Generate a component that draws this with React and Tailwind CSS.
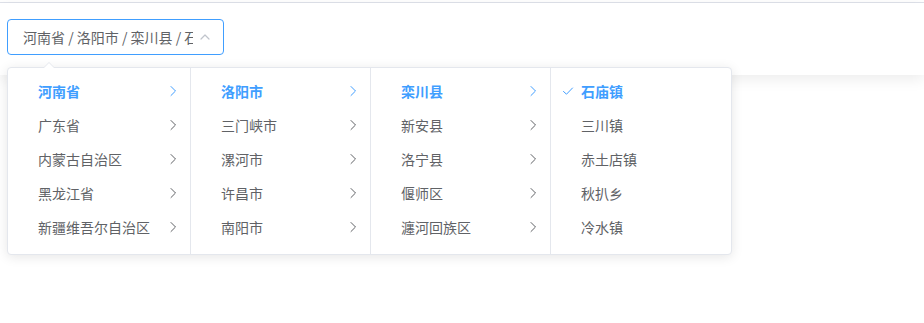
import React from "react";

const columns = [
  {
    items: ["河南省", "广东省", "内蒙古自治区", "黑龙江省", "新疆维吾尔自治区"],
    width: "w-[183px]",
    leaf: false,
  },
  {
    items: ["洛阳市", "三门峡市", "漯河市", "许昌市", "南阳市"],
    width: "w-[180px]",
    leaf: false,
  },
  {
    items: ["栾川县", "新安县", "洛宁县", "偃师区", "瀍河回族区"],
    width: "w-[180px]",
    leaf: false,
  },
  {
    items: ["石庙镇", "三川镇", "赤土店镇", "秋扒乡", "冷水镇"],
    width: "w-[180px]",
    leaf: true,
  },
];

function Chevron({ className }) {
  return (
    <svg viewBox="0 0 14 14" className={className} fill="none">
      <path d="M5 2.5 L9.5 7 L5 11.5" stroke="currentColor" strokeWidth="1" strokeLinecap="round" strokeLinejoin="round" />
    </svg>
  );
}

function Check({ className }) {
  return (
    <svg viewBox="0 0 12 12" className={className} fill="none">
      <path d="M1.5 6.5 L4.5 9.2 L10.5 3" stroke="currentColor" strokeWidth="1" strokeLinecap="round" strokeLinejoin="round" />
    </svg>
  );
}

function Column({ col, last }) {
  return (
    <div className={`${col.width} h-[186px] pt-[6px] ${last ? "" : "border-r border-[#e4e7ed]"}`}>
      {col.items.map((name, i) => {
        const active = i === 0;
        return (
          <div
            key={name}
            className={`flex items-center h-[34px] pl-[10px] pr-[10px] text-[14px] ${
              active ? "text-[#409eff] font-bold" : "text-[#606266]"
            }`}
          >
            <div className="w-[20px] flex items-center">
              {col.leaf && active && <Check className="w-[12px] h-[12px] ml-[1px]" />}
            </div>
            <span className="flex-1 whitespace-nowrap">{name}</span>
            {!col.leaf && (
              <Chevron
                className={`w-[14px] h-[14px] ${active ? "text-[#409eff]" : "text-[#606266]"}`}
              />
            )}
          </div>
        );
      })}
    </div>
  );
}

export default function App() {
  return (
    <div
      className="relative w-[924px] h-[323px] bg-white overflow-hidden"
      style={{ fontFamily: '"Noto Sans CJK SC", "Liberation Sans", sans-serif' }}
    >
      <div className="h-[2px]" />
      <div className="h-[1px] bg-[#dfe2ea]" />
      <div className="h-[72px] bg-white shadow-[0_4px_14px_0_rgba(0,0,0,0.08)] pt-[16px] pl-[7px]">
        <div className="flex items-center w-[217px] h-[36px] border border-[#409eff] rounded-[4px] pl-[15px] pr-[9px]">
          <div className="w-[170px] overflow-hidden whitespace-nowrap text-[14px] text-[#606266]">
            河南省 / 洛阳市 / 栾川县 / 石庙镇
          </div>
          <svg viewBox="0 0 12 12" className="ml-[6px] w-[12px] h-[12px] text-[#c0c4cc]" fill="none">
            <path d="M2 8 L6 4 L10 8" stroke="currentColor" strokeWidth="1.2" strokeLinecap="round" strokeLinejoin="round" />
          </svg>
        </div>
      </div>

      <div className="absolute left-[7px] top-[67px] z-10 bg-white border border-[#e4e7ed] rounded-[4px] shadow-[0_2px_12px_0_rgba(0,0,0,0.1)]">
        <div className="absolute -top-[6px] left-[35px] w-0 h-0 border-l-[6px] border-r-[6px] border-b-[6px] border-l-transparent border-r-transparent border-b-[#e4e7ed]" />
        <div className="absolute -top-[5px] left-[36px] w-0 h-0 border-l-[5px] border-r-[5px] border-b-[5px] border-l-transparent border-r-transparent border-b-white" />
        <div className="flex">
          {columns.map((col, i) => (
            <Column key={i} col={col} last={i === columns.length - 1} />
          ))}
        </div>
      </div>
    </div>
  );
}
